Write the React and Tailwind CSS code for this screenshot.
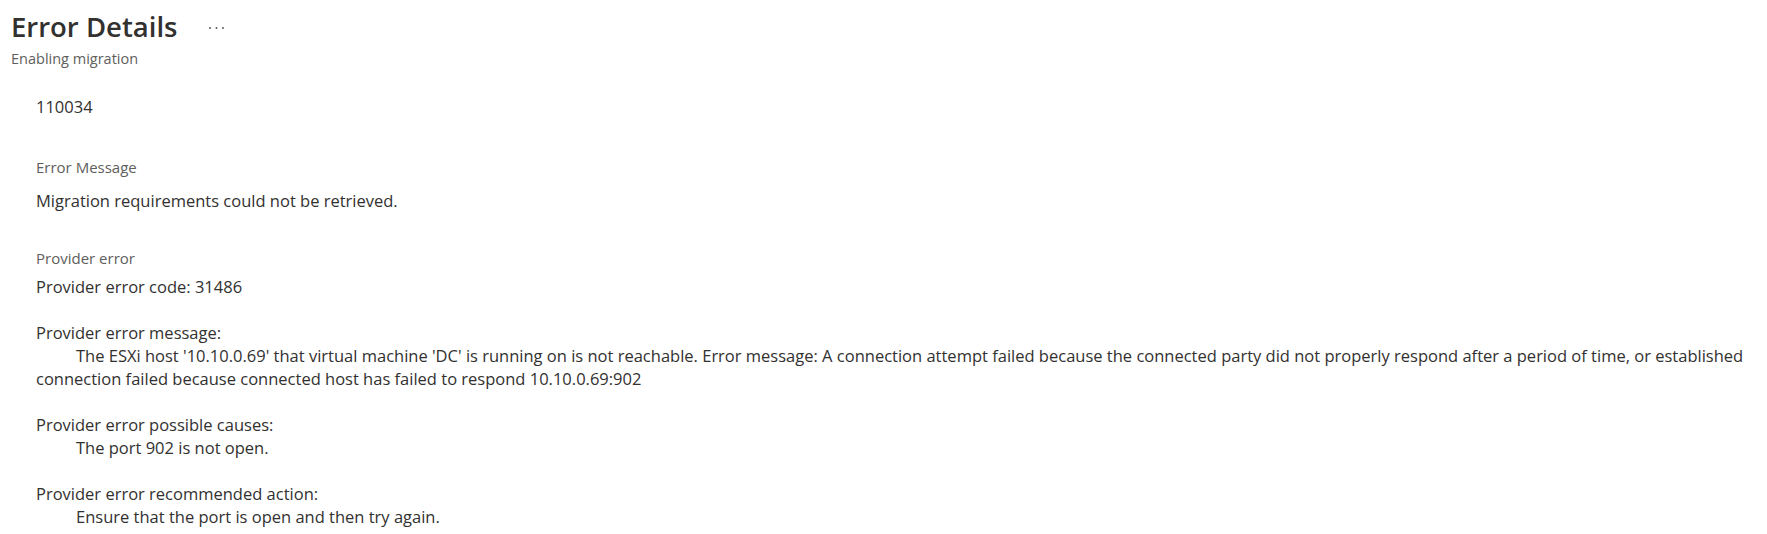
function MoreIcon() {
  return (
    <svg width="18" height="6" viewBox="0 0 18 6" className="text-[#605e5c]" aria-hidden="true">
      <circle cx="2" cy="3" r="1" fill="currentColor" />
      <circle cx="8.5" cy="3" r="1" fill="currentColor" />
      <circle cx="15" cy="3" r="1" fill="currentColor" />
    </svg>
  );
}

function Label({ children, className = "" }) {
  return <div className={`text-[15px] leading-[18px] text-[#605e5c] ${className}`}>{children}</div>;
}

function Line({ children, className = "" }) {
  return <p className={`text-[16.5px] leading-[23px] text-[#323130] ${className}`}>{children}</p>;
}

export default function App() {
  return (
    <div className="min-h-[534px] w-full bg-white text-[#323130]" style={{ fontFamily: '"Open Sans", "Noto Sans", sans-serif' }}>
      <header className="flex flex-col pl-[11px] pt-[9px]">
        <div className="flex items-center">
          <h1 className="text-[27.5px] font-semibold leading-[36px] text-[#323130]">Error Details</h1>
          <button className="ml-[31px] mt-[1px] flex h-[20px] items-center">
            <MoreIcon />
          </button>
        </div>
        <div className="mt-[5px] text-[14.5px] leading-[18px] text-[#605e5c]">Enabling migration</div>
      </header>

      <main className="flex flex-col pl-[36px] pt-[27px]">
        <Line>110034</Line>

        <section className="mt-[40px] flex flex-col">
          <Label>Error Message</Label>
          <Line className="mt-[13px]">Migration requirements could not be retrieved.</Line>
        </section>

        <section className="mt-[37px] flex flex-col">
          <Label>Provider error</Label>
          <div className="mt-[8px] flex flex-col">
            <Line>Provider error code: 31486</Line>
            <Line className="mt-[23px]">Provider error message:</Line>
            <Line className="indent-[40px]">
              The ESXi host '10.10.0.69' that virtual machine 'DC' is running on is not reachable. Error message: A connection attempt failed because the connected party did not properly respond after a period of time, or established connection failed because connected host has failed to respond 10.10.0.69:902
            </Line>
            <Line className="mt-[23px]">Provider error possible causes:</Line>
            <Line className="indent-[40px]">The port 902 is not open.</Line>
            <Line className="mt-[23px]">Provider error recommended action:</Line>
            <Line className="indent-[40px]">Ensure that the port is open and then try again.</Line>
          </div>
        </section>
      </main>
    </div>
  );
}
